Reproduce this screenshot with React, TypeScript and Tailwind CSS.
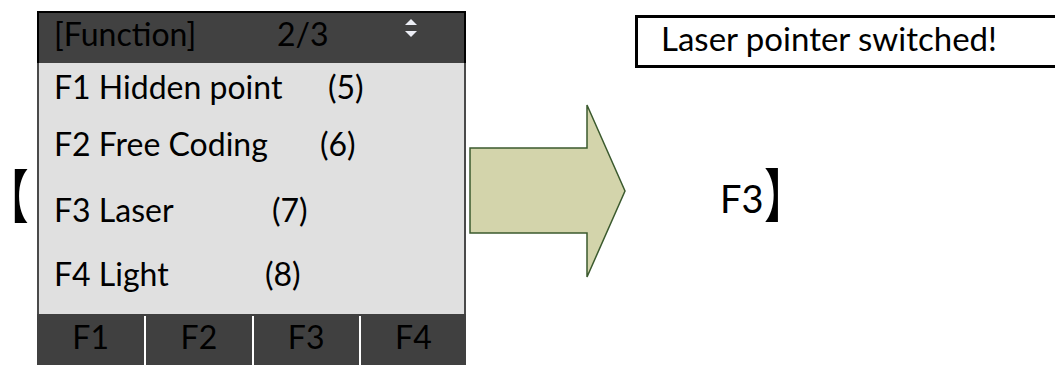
import React from "react"

const rows = [
    { label: "F1 Hidden point", num: "(5)", w: "w-[274px]", mt: "mt-[5px]" },
    { label: "F2 Free Coding", num: "(6)", w: "w-[266px]", mt: "mt-[19px]" },
    { label: "F3 Laser", num: "(7)", w: "w-[218px]", mt: "mt-[27px]" },
    { label: "F4 Light", num: "(8)", w: "w-[211px]", mt: "mt-[26px]" },
]

const Arrow = () => (
    <svg width="160" height="176" viewBox="0 0 160 176" className="mt-[103px] ml-[2px] shrink-0">
        <path
            d="M2 45 L119 45 L119 2 L157 88 L119 174 L119 130 L2 130 Z"
            fill="#d3d4ab"
            stroke="#3b5a2e"
            strokeWidth="1.5"
        />
    </svg>
)

// palt trims the full-width side bearings of the CJK brackets
const Bracket = ({ ch }: { ch: string }) => (
    <span className="inline-block origin-left scale-x-[0.72] text-[58px] leading-none font-['Noto_Sans_CJK_SC',sans-serif] [font-feature-settings:'palt']">
        {ch}
    </span>
)

export default function App() {
    return (
        <div className="w-[1055px] h-[365px] overflow-hidden bg-white text-black font-['Lato','Noto_Sans_CJK_SC',sans-serif]">
            <div className="flex items-start">
                {/* left bracket */}
                <div className="w-[37px] shrink-0 mt-[164px] pl-[7px] flex">
                    <Bracket ch="【" />
                </div>

                {/* device screen */}
                <div className="w-[429px] h-[360px] mt-[11px] shrink-0 flex flex-col overflow-hidden">
                    <div className="h-[52px] bg-[#414141] border-t-2 border-x-2 border-black shrink-0 pl-[15px] pt-[2px] flex items-start text-[32px] leading-[1.2]">
                        <span className="w-[223px] shrink-0">[Function]</span>
                        <span className="w-[127px] shrink-0">2/3</span>
                        <svg width="14" height="20" viewBox="0 0 14 20" className="mt-[3px]">
                            <path d="M7 1 L13 7 L1 7 Z" fill="#eceef5" />
                            <path d="M1 13 L13 13 L7 19 Z" fill="#eceef5" />
                        </svg>
                    </div>

                    <div className="h-[251px] bg-[#e0e0e0] border-x-2 border-[#4a4a4a] shrink-0 pl-[15px] text-[32px] leading-[1.2]">
                        {rows.map((r) => (
                            <div key={r.label} className={`${r.mt} flex`}>
                                <span className={`${r.w} shrink-0`}>{r.label}</span>
                                <span>{r.num}</span>
                            </div>
                        ))}
                    </div>

                    <div className="flex-1 bg-[#404040] grid grid-cols-4 text-[32px] leading-[1.2]">
                        {["F1", "F2", "F3", "F4"].map((f, i) => (
                            <div key={f} className={`flex justify-center pt-[4px] ${i > 0 ? "border-l-2 border-white mt-[2px]" : ""}`}>
                                <span className={i > 0 ? "-mt-[2px]" : ""}>{f}</span>
                            </div>
                        ))}
                    </div>
                </div>

                <Arrow />

                <div className="flex-1 ml-[7px] mt-[15px] flex flex-col">
                    <div className="w-[440px] h-[53px] border-[3px] border-black pl-[23px] pt-[1px] text-[33px] leading-[1.2]">
                        Laser pointer switched!
                    </div>
                    <div className="ml-[85px] mt-[95px] flex items-start">
                        <span className="mt-[16px] text-[38px] leading-none">F3</span>
                        <span className="ml-[1px]">
                            <Bracket ch="】" />
                        </span>
                    </div>
                </div>
            </div>
        </div>
    )
}
